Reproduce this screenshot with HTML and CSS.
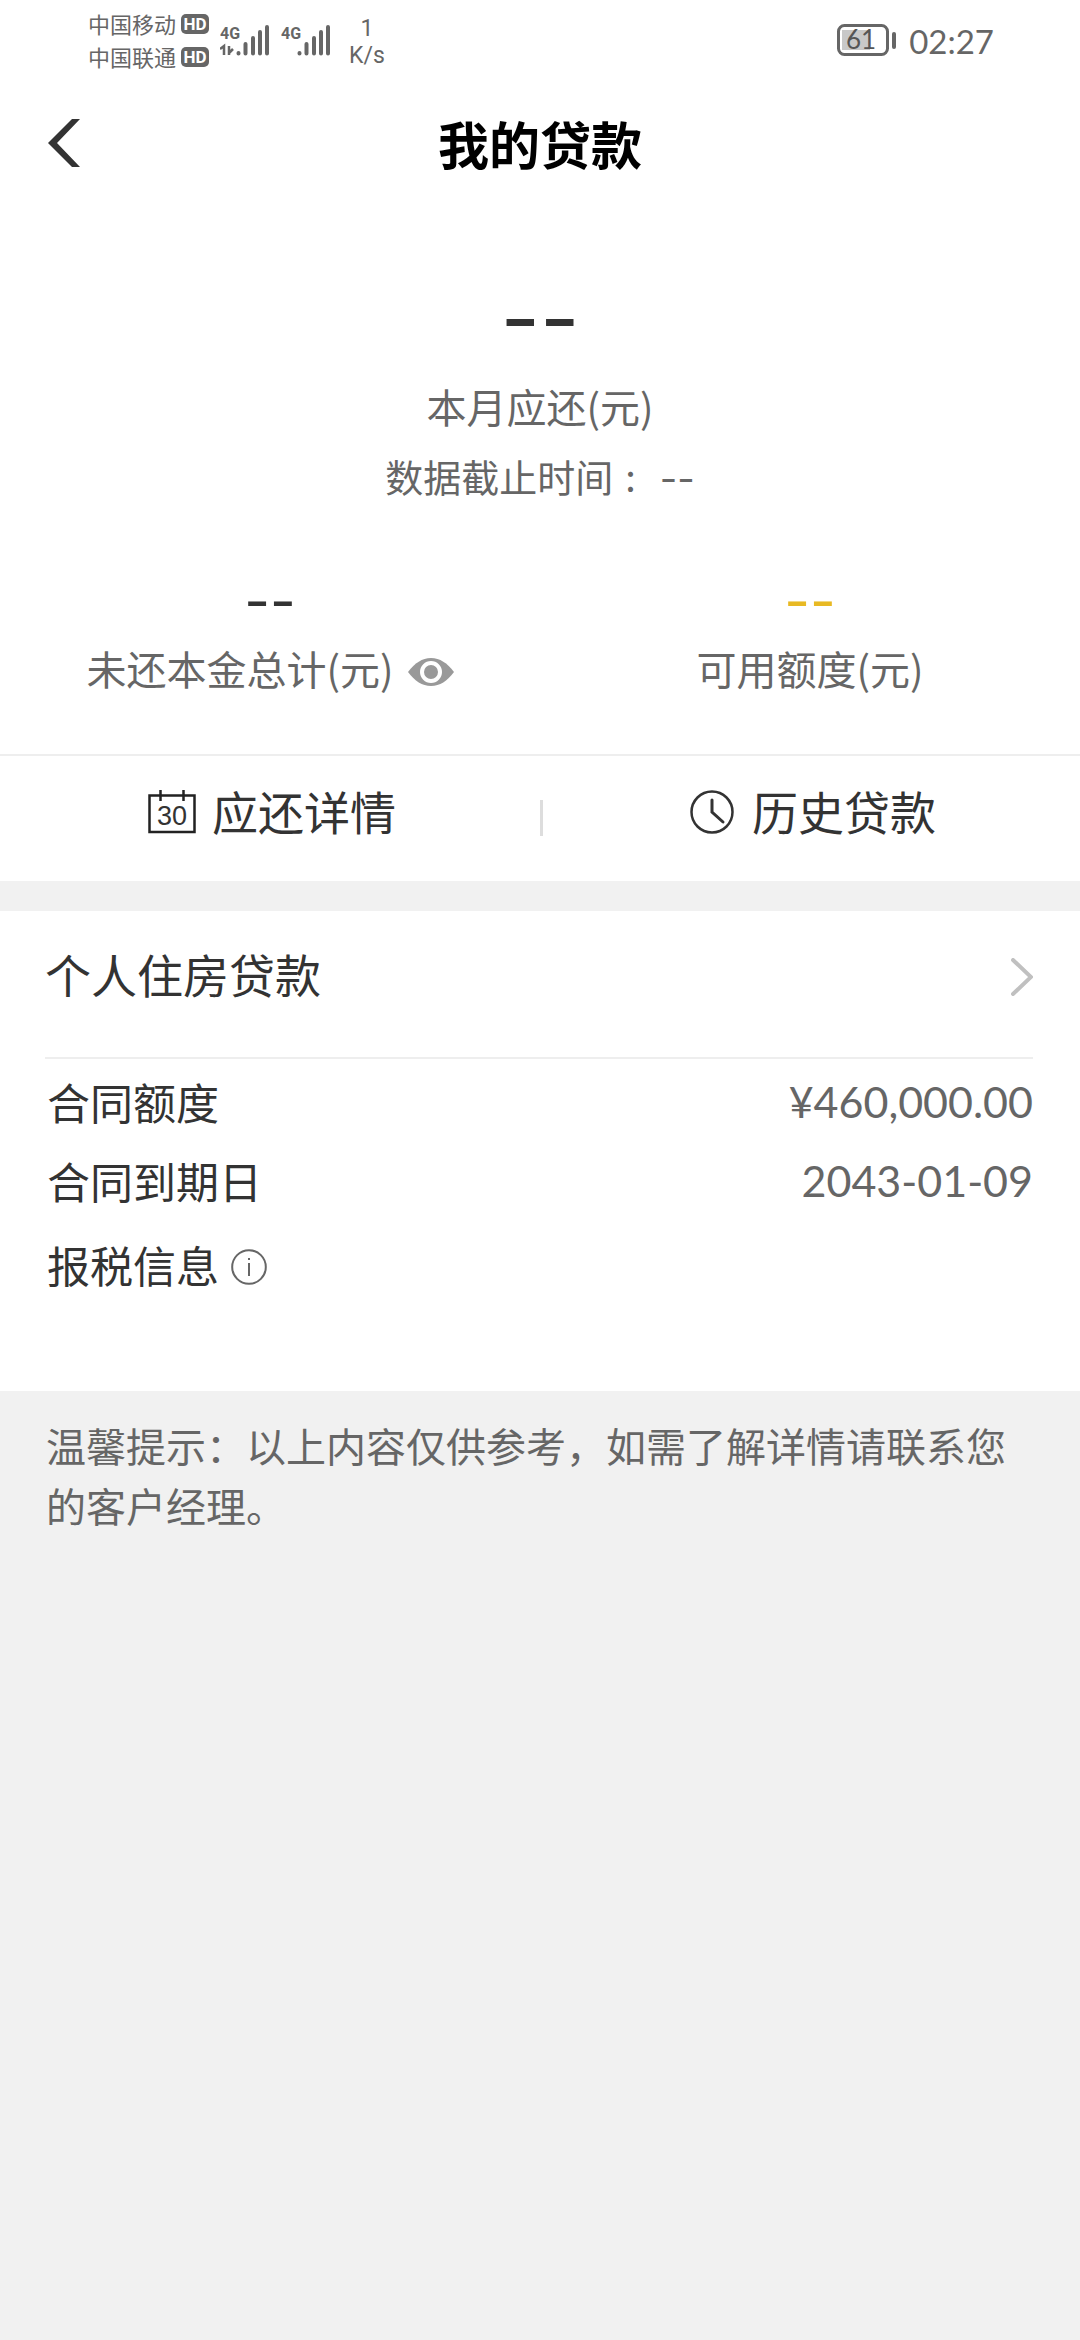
FILE: index.html
```html
<!DOCTYPE html>
<html lang="zh-CN">

<head>
    <meta charset="UTF-8">
    <meta name="viewport" content="width=device-width, initial-scale=1.0">
    <title>我的贷款</title>
    <link rel="stylesheet" href="styles.css">
</head>

<body>

    <div class="status-bar">
        <div class="carriers">
            <div class="carrier">中国移动 <span class="hd">HD</span></div>
            <div class="carrier">中国联通 <span class="hd">HD</span></div>
        </div>
        <svg class="signal" width="50" height="32" viewBox="0 0 50 32">
            <text class="signal-text" x="0" y="15">4G</text>
            <path d="M0 25l4-3v9M9 22v9M9 29l4-4" fill="none" stroke="#666" stroke-width="2.500" />
            <path d="M18.500 29v.5M25.500 20v9.500M33 14v15.500M40 8v21.500M47 3v26.500" fill="none" stroke="#666" stroke-width="4" stroke-linecap="round" />
        </svg>
        <svg class="signal" width="50" height="32" viewBox="0 0 50 32">
            <text class="signal-text" x="0" y="15">4G</text>
            <path d="M18.500 29v.5M25.500 20v9.500M33 14v15.500M40 8v21.500M47 3v26.500" fill="none" stroke="#666" stroke-width="4" stroke-linecap="round" />
        </svg>
        <div class="speed">
            <span>1</span>
            <span>K/s</span>
        </div>
        <div class="status-right">
            <svg width="60" height="32" viewBox="0 0 60 32">
                <rect x="1.500" y="1.500" width="49" height="29" rx="6" fill="none" stroke="#666" stroke-width="3" />
                <rect x="5" y="6" width="28" height="20" fill="#c8c8c8" />
                <rect x="55" y="8" width="4" height="17" rx="2" fill="#666" />
                <text class="battery-text" x="24" y="25">61</text>
            </svg>
            <span class="clock">02:27</span>
        </div>
    </div>

    <header class="header">
        <button class="back" type="button" aria-label="返回">
            <svg width="32" height="48" viewBox="0 0 32 48">
                <path d="M24 0h8L9 24l23 24h-8L0 24z" fill="#333" />
            </svg>
        </button>
        <h1>我的贷款</h1>
    </header>

    <section class="summary">
        <div class="total">--</div>
        <div class="label">本月应还(元)</div>
        <div class="deadline">数据截止时间<span class="colon">:</span><span class="dashes">--</span></div>
        <div class="stats">
            <div class="stat">
                <div class="amount">--</div>
                <div class="label">
                    未还本金总计(元)
                    <button class="eye" type="button" aria-label="显示金额">
                        <svg width="46" height="28" viewBox="0 0 46 28">
                            <path d="M0 14C7 5 14 0 23 0s16 5 23 14c-7 9-14 14-23 14S7 23 0 14z" fill="#999" />
                            <circle cx="23" cy="14" r="9" fill="#999" stroke="#fff" stroke-width="4" />
                        </svg>
                    </button>
                </div>
            </div>
            <div class="stat">
                <div class="amount yellow">--</div>
                <div class="label">可用额度(元)</div>
            </div>
        </div>
    </section>

    <nav class="actions">
        <a href="#detail">
            <svg width="48" height="46" viewBox="0 0 48 46">
                <path d="M1.500 6.500h45v36.500h-45zM12.500 1v11M35.500 1v11" fill="none" stroke="#222" stroke-width="2.500" />
                <text class="calendar-text" x="24" y="36">30</text>
            </svg>
            应还详情
        </a>
        <a href="#history">
            <svg width="48" height="46" viewBox="0 0 48 46">
                <circle cx="24" cy="23" r="20.500" fill="none" stroke="#333" stroke-width="2.500" />
                <path d="M24 11v12l11 10" fill="none" stroke="#333" stroke-width="3" stroke-linecap="round" />
            </svg>
            历史贷款
        </a>
    </nav>

    <section class="loan">
        <a class="loan-title" href="#loan">
            个人住房贷款
            <svg width="22" height="38" viewBox="0 0 22 38">
                <path d="M2 2l18 17L2 36" fill="none" stroke="#c0c0c0" stroke-width="4" stroke-linecap="round" />
            </svg>
        </a>
        <div class="row">
            <span>合同额度</span>
            <span class="value">¥460,000.00</span>
        </div>
        <div class="row">
            <span>合同到期日</span>
            <span class="value">2043-01-09</span>
        </div>
        <div class="row tax">
            <span>报税信息</span>
            <button class="info" type="button" aria-label="报税信息说明">
                <svg width="36" height="36" viewBox="0 0 36 36">
                    <circle cx="18" cy="18" r="16.800" fill="none" stroke="#666" stroke-width="2" />
                    <path d="M18 14v13M18 9v2" fill="none" stroke="#666" stroke-width="2" />
                </svg>
            </button>
        </div>
    </section>

    <p class="tips">温馨提示：以上内容仅供参考，如需了解详情请联系您的客户经理。</p>

</body>

</html>
```
FILE: styles.css
```css
* {
    box-sizing: border-box;
}

body {
    margin: 0;
    background-color: #f1f1f1;
    color: #333;
    font-family: "Noto Sans CJK SC", sans-serif;
    font-size: 43px;
}

button {
    padding: 0;
    border: none;
    background: none;
    cursor: pointer;
}

a {
    color: inherit;
    text-decoration: none;
}

svg {
    display: block;
    flex: none;
}

/* status bar */
.status-bar {
    display: flex;
    align-items: center;
    gap: 11px;
    height: 80px;
    padding: 0 86px 0 88px;
    background-color: #fff;
    color: #666;
}

.carrier {
    display: flex;
    align-items: center;
    gap: 5px;
    font-size: 22px;
    line-height: 33px;
}

.hd {
    width: 28px;
    border-radius: 5px;
    background-color: #666;
    color: #fff;
    font-family: Roboto, sans-serif;
    font-size: 17px;
    font-weight: bold;
    line-height: 20px;
    text-align: center;
}

.signal-text {
    fill: #666;
    font-family: Roboto, sans-serif;
    font-size: 16px;
    font-weight: bold;
}

.speed {
    display: flex;
    flex-direction: column;
    padding: 4px 0 0 7px;
    font-family: Roboto, sans-serif;
    font-size: 23px;
    line-height: 27px;
    text-align: center;
}

.status-right {
    display: flex;
    align-items: center;
    gap: 12px;
    margin-left: auto;
}

.battery-text {
    fill: #555;
    font-family: Lato, sans-serif;
    font-size: 26px;
    text-anchor: middle;
}

.clock {
    padding-top: 2px;
    font-family: Lato, sans-serif;
    font-size: 33px;
    line-height: 40px;
}

/* title */
.header {
    display: grid;
    grid-template-columns: 1fr auto 1fr;
    align-items: center;
    height: 126px;
    padding: 0 48px;
    background-color: #fff;
}

h1 {
    margin: 0;
    color: #000;
    font-size: 51px;
    line-height: 72px;
}

/* summary */
.summary {
    padding: 70px 0 50px;
    background-color: #fff;
    color: #666;
    text-align: center;
}

.total {
    margin-bottom: 10px;
    color: #333;
    font-family: Inter, sans-serif;
    font-size: 86px;
    line-height: 84px;
}

.label {
    display: flex;
    align-items: center;
    justify-content: center;
    gap: 14px;
    font-size: 40px;
    line-height: 72px;
}

.eye {
    padding-top: 8px;
}

.deadline {
    font-size: 38px;
    line-height: 68px;
}

.colon {
    padding: 0 24px 0 12px;
}

.dashes {
    font-family: Inter, sans-serif;
}

.stats {
    display: grid;
    grid-template-columns: 1fr 1fr;
    padding-top: 62px;
}

.amount {
    margin-bottom: 4px;
    color: #333;
    font-family: Inter, sans-serif;
    font-size: 56px;
    line-height: 54px;
}

.amount.yellow {
    color: #e8b923;
}

/* actions */
.actions {
    display: grid;
    grid-template-columns: 1fr 1fr;
    padding: 18px 0 35px;
    border-top: 2px solid #eee;
    background-color: #fff;
    font-size: 46px;
    line-height: 72px;
}

.actions a {
    display: flex;
    align-items: center;
    justify-content: center;
    gap: 16px;
    padding-left: 4px;
}

.actions a + a {
    background: linear-gradient(#ddd, #ddd) left 26px / 3px 36px no-repeat;
}

.actions svg {
    margin-top: 4px;
}

.calendar-text {
    fill: #333;
    font-family: "Liberation Sans", sans-serif;
    font-size: 27px;
    text-anchor: middle;
}

/* loan */
.loan {
    margin-top: 30px;
    padding: 0 47px 87px 45px;
    background-color: #fff;
}

.loan-title {
    display: flex;
    align-items: center;
    justify-content: space-between;
    height: 148px;
    margin-bottom: 3px;
    padding-bottom: 22px;
    border-bottom: 2px solid #eee;
    font-size: 46px;
}

.loan-title svg {
    margin-top: 8px;
}

.row {
    display: flex;
    align-items: center;
    justify-content: space-between;
    padding-left: 2px;
    line-height: 79px;
}

.value {
    color: #666;
    font-family: Lato, sans-serif;
}

.tax {
    justify-content: flex-start;
    gap: 12px;
    padding-top: 5px;
}

.info {
    padding-top: 4px;
}

.tips {
    margin: 0;
    padding: 24px 46px;
    color: #666;
    font-size: 40px;
    line-height: 60px;
}
```
